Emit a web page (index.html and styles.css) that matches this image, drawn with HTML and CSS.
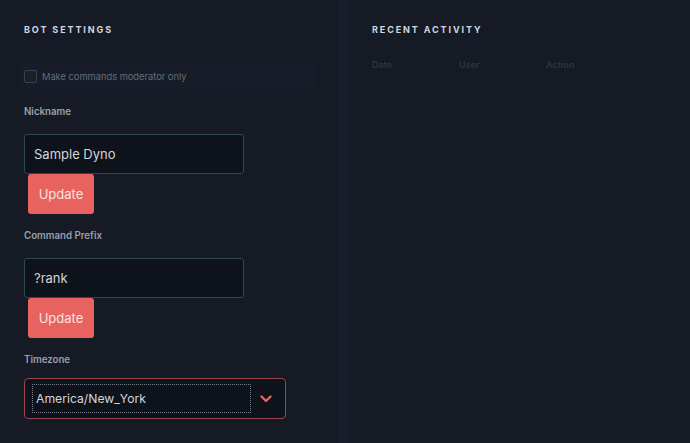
FILE: index.html
```html
<!DOCTYPE html>
<html lang="en">
<head>
    <meta charset="UTF-8">
    <meta name="viewport" content="width=device-width, initial-scale=1.0">
    <title>Bot Settings</title>
    <link rel="stylesheet" href="styles.css">
</head>
<body>
    <div class="dashboard">
        <div class="panel settings">
            <h2 class="panel-title">Bot Settings</h2>
            <label class="check-row">
                <span class="check-box"></span>
                <span>Make commands moderator only</span>
            </label>

            <div class="field">
                <p class="field-label">Nickname</p>
                <input type="text" class="text-input" value="Sample Dyno">
                <button class="update-button">Update</button>
            </div>

            <div class="field">
                <p class="field-label">Command Prefix</p>
                <input type="text" class="text-input" value="?rank">
                <button class="update-button">Update</button>
            </div>

            <div class="field">
                <p class="field-label">Timezone</p>
                <div class="select-box">
                    <span class="select-value">America/New_York</span>
                    <svg class="chevron" width="12" height="8" viewBox="0 0 12 8">
                        <path d="M1.5 1.5 L6 6 L10.5 1.5" fill="none" stroke="#e8615f" stroke-width="2.4" stroke-linecap="round" stroke-linejoin="round"/>
                    </svg>
                </div>
            </div>
        </div>
        <div class="divider"></div>
        <div class="panel activity">
            <h2 class="panel-title">Recent Activity</h2>
            <div class="table-head">
                <span>Date</span>
                <span>User</span>
                <span>Action</span>
            </div>
        </div>
    </div>
</body>
</html>
```

FILE: styles.css
```css
body {
    font-family: Inter, "Liberation Sans", sans-serif;
    margin: 0;
    padding: 0;
    background-color: #151a25;
    width: 690px;
    height: 443px;
    overflow: hidden;
}
.dashboard {
    display: flex;
    height: 443px;
}
.panel {
    padding: 24px 0 0 24px;
    box-sizing: border-box;
}
.settings {
    width: 338px;
}
.divider {
    width: 10px;
    background-color: #181e2c;
}
.activity {
    flex: 1;
    padding-left: 24px;
}
.panel-title {
    margin: 0;
    font-size: 9px;
    font-weight: 700;
    letter-spacing: 1.9px;
    text-transform: uppercase;
    color: #d2d6de;
    line-height: 12px;
}
.check-row {
    display: flex;
    align-items: center;
    gap: 5px;
    margin: 28px 0 1px -4px;
    padding: 6px 4px;
    width: 290px;
    background-color: #171c28;
    border-radius: 6px;
    font-size: 9.3px;
    color: #666d7a;
}
.check-box {
    width: 11px;
    height: 11px;
    border: 1px solid #3a414d;
    border-radius: 2px;
    background-color: #1b202b;
}
.field {
    display: flex;
    flex-direction: column;
    align-items: flex-start;
}
.field-label {
    margin: 16px 0 16px;
    font-size: 9.7px;
    font-weight: 600;
    color: #9aa1ac;
    line-height: 12px;
}
.text-input {
    width: 220px;
    height: 40px;
    box-sizing: border-box;
    padding: 0 9px;
    background-color: #0e121a;
    border: 1px solid #2b4a4e;
    border-radius: 3px;
    font-family: Inter, "Liberation Sans", sans-serif;
    font-size: 13px;
    color: #d3d6db;
    outline: none;
}
.update-button {
    margin: 0 0 0 4px;
    width: 66px;
    height: 40px;
    border: none;
    border-radius: 3px;
    background-color: #e8625f;
    font-family: Inter, "Liberation Sans", sans-serif;
    font-size: 13px;
    color: #fde2df;
}
.select-box {
    display: flex;
    align-items: center;
    width: 262px;
    height: 41px;
    box-sizing: border-box;
    padding: 5px 10px 5px 7px;
    margin-top: -4px;
    background-color: #0e121a;
    border: 1.5px solid #9c444e;
    border-radius: 4px;
}
.select-value {
    display: flex;
    align-items: center;
    width: 219px;
    height: 29px;
    box-sizing: border-box;
    padding-left: 3px;
    border: 1px dotted #7b818b;
    font-size: 12.2px;
    color: #d3d6db;
}
.chevron {
    margin-left: 9px;
}
.table-head {
    display: flex;
    margin-top: 23px;
    font-size: 9px;
    font-weight: 600;
    color: #2d3543;
}
.table-head span {
    width: 87px;
}
```
